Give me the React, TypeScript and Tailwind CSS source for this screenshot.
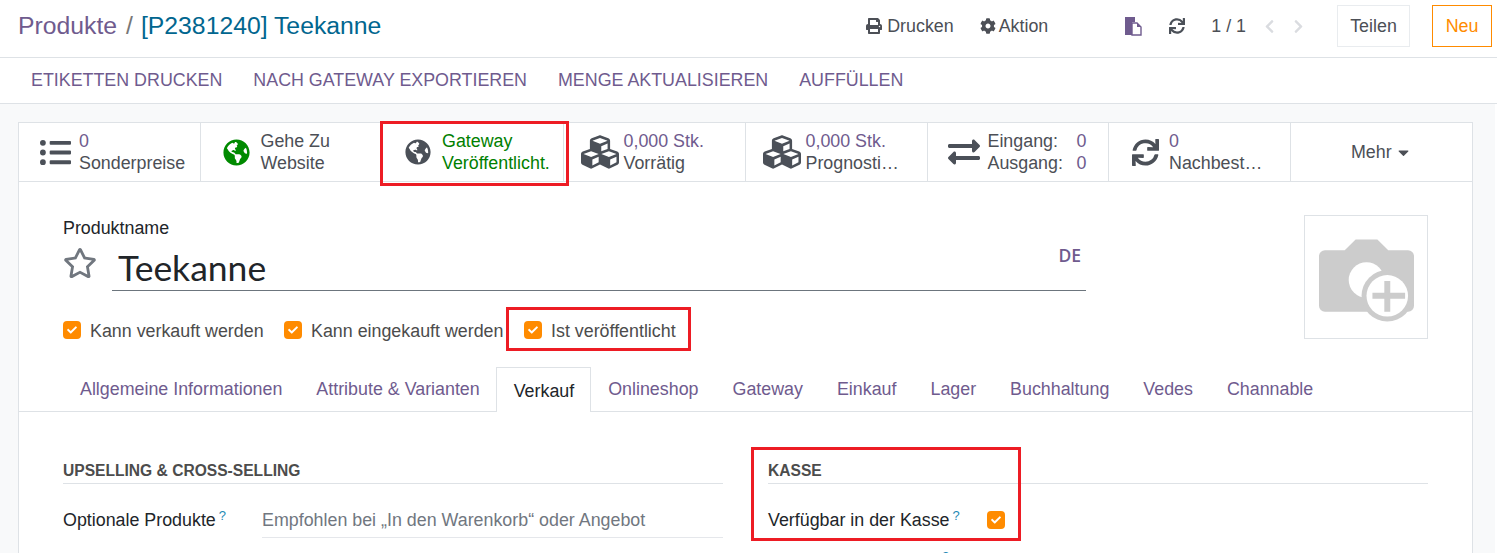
import type { ReactNode } from 'react';
import { FaCaretDown, FaCheck, FaChevronLeft, FaChevronRight, FaCog, FaCubes, FaExchangeAlt, FaGlobeAmericas, FaListUl, FaPrint, FaRegStar, FaSync } from 'react-icons/fa';

const Check = () => (
  <span className="flex size-[18px] items-center justify-center rounded-[4px] bg-[#ff8b00] text-white">
    <FaCheck className="size-[10px]" />
  </span>
);

const CheckRow = ({ label, className }: { label: string; className: string }) => (
  <div className={`flex items-center gap-[9px] ${className}`}>
    <Check />
    <span className="pt-[2px] text-[#4c4c4c]">{label}</span>
  </div>
);

const Stat = ({ icon, children, w = 'w-[181.5px]' }: { icon: ReactNode; children: ReactNode; w?: string }) => (
  <div className={`flex h-full items-center border-r border-[#dee2e6] last:border-r-0 ${w}`}>
    <div className="flex w-[60px] shrink-0 justify-center pl-[12px] text-[#4b5058]">{icon}</div>
    <div className="min-w-0 text-[17.85px] leading-[22.5px] text-[#4c4f56]">{children}</div>
  </div>
);

const tabs = ['Allgemeine Informationen', 'Attribute & Varianten', 'Verkauf', 'Onlineshop', 'Gateway', 'Einkauf', 'Lager', 'Buchhaltung', 'Vedes', 'Channable'];

export default function App() {
  return (
    <div className="relative h-[553px] w-[1497px] overflow-hidden bg-white font-['Liberation_Sans',sans-serif] text-[17.85px] text-[#4c4c4c]">
      <header className="flex h-[58px] items-center border-b border-[#dee2e6] pb-[5px] pl-[18px] pr-[5px]">
        <h1 className="flex-1 text-[24.75px]">
          <span className="text-[#6f5b8e]">Produkte</span>
          <span className="ml-[9px] mr-[8px] text-[#777]">/</span>
          <span className="text-[#01668f]">[P2381240] Teekanne</span>
        </h1>
        <div className="flex items-center text-[#4c4f56]">
          <span className="flex items-center gap-[5px]"><FaPrint className="size-[16px]" />Drucken</span>
          <span className="ml-[26px] flex items-center gap-[3px]"><FaCog className="size-[16px]" />Aktion</span>
          <svg viewBox="0 0 18 20" className="ml-[76px] h-[20px] w-[18px]">
            <path d="M1 1h10v5h-3v13H1z" fill="#6f5b8e" />
            <path d="M8 7h5l4 4v8H8z" fill="#fff" stroke="#6f5b8e" strokeWidth="1.4" />
            <path d="M13 7v4h4" fill="#6f5b8e" />
          </svg>
          <FaSync className="ml-[27px] size-[16px] text-[#4b5058]" />
          <span className="ml-[26px]">1 / 1</span>
          <FaChevronLeft className="ml-[16px] size-[15px] text-[#dadce0]" />
          <FaChevronRight className="ml-[14px] size-[15px] text-[#dadce0]" />
          <span className="ml-[31px] flex h-[42px] w-[73px] items-center justify-center border border-[#e9ecef]">Teilen</span>
          <span className="ml-[22px] flex h-[42px] w-[60px] items-center justify-center border border-[#ff8b00] text-[#ff8b00]">Neu</span>
        </div>
      </header>

      <nav className="flex h-[46px] items-center gap-[31px] border-b border-[#dee2e6] pb-[1px] pl-[31px] text-[#6f5b8e]">
        <span>ETIKETTEN DRUCKEN</span>
        <span>NACH GATEWAY EXPORTIEREN</span>
        <span>MENGE AKTUALISIEREN</span>
        <span>AUFFÜLLEN</span>
      </nav>

      <main className="mr-[2px] h-full bg-[#f8f9fa] pl-[18px] pr-[22px] pt-[18px]">
        <div className="h-full border border-[#dee2e6] bg-white">
          <div className="flex h-[59px] border-b border-[#dee2e6]">
            <Stat icon={<FaListUl className="size-[31px]" />}>
              <div className="text-[#6f5b8e]">0</div>
              <div>Sonderpreise</div>
            </Stat>
            <Stat icon={<FaGlobeAmericas className="size-[27px] text-[#008a00]" />}>
              <div>Gehe Zu</div>
              <div>Website</div>
            </Stat>
            <Stat icon={<FaGlobeAmericas className="size-[26px]" />}>
              <div className="text-[#008000]">Gateway</div>
              <div className="text-[#008000]">Veröffentlicht.</div>
            </Stat>
            <Stat w="w-[182px]" icon={<FaCubes className="size-[38px]" />}>
              <div className="text-[#6f5b8e]">0,000 Stk.</div>
              <div>Vorrätig</div>
            </Stat>
            <Stat w="w-[182px]" icon={<FaCubes className="size-[38px]" />}>
              <div className="text-[#6f5b8e]">0,000 Stk.</div>
              <div>Prognosti…</div>
            </Stat>
            <Stat icon={<FaExchangeAlt className="size-[32px]" />}>
              <div className="flex w-[99px] justify-between"><span>Eingang:</span><span className="text-[#6f5b8e]">0</span></div>
              <div className="flex w-[99px] justify-between"><span>Ausgang:</span><span className="text-[#6f5b8e]">0</span></div>
            </Stat>
            <Stat icon={<FaSync className="size-[27px]" />}>
              <div className="text-[#6f5b8e]">0</div>
              <div>Nachbest…</div>
            </Stat>
            <div className="flex flex-1 items-center justify-center gap-[3px] text-[#4c4f56]">
              Mehr <FaCaretDown className="size-[17px]" />
            </div>
          </div>

          <div className="flex justify-between px-[44px] pt-[33px]">
            <div className="w-[1023px] pt-[1px]">
              <div className="leading-[24px] text-[#212529]">Produktname</div>
              <div className="flex">
                <div className="w-[36px] pt-[7px]"><FaRegStar className="h-[32px] w-[34px] text-[#71777f]" /></div>
                <div className="ml-[13px] flex h-[51px] flex-1 items-center justify-between border-b border-[#6c757d] pl-[6px] pt-[6px]">
                  <span className="font-['Lato',sans-serif] text-[35.5px] leading-[44px] text-[#212529]">Teekanne</span>
                  <span className="mb-[26px] mr-[5px] font-['Open_Sans',sans-serif] text-[17.5px] font-semibold text-[#6f5b8e]">DE</span>
                </div>
              </div>
              <div className="mt-[27px] flex h-[24px] items-center">
                <CheckRow label="Kann verkauft werden" className="w-[221px]" />
                <CheckRow label="Kann eingekauft werden" className="w-[240px]" />
                <CheckRow label="Ist veröffentlicht" className="" />
              </div>
            </div>
            <div className="flex h-[124px] w-[124px] items-center justify-center border border-[#dee2e6] pt-[6px]">
              <svg viewBox="0 0 96 84" className="h-[84px] w-[95px]">
                <path d="M6 12h20L37 1h22l11 11h20a6 6 0 0 1 6 6v50a6 6 0 0 1-6 6H6a6 6 0 0 1-6-6V18a6 6 0 0 1 6-6z" fill="#ccc" />
                <circle cx="48" cy="42" r="18" fill="#fff" />
                <circle cx="69" cy="58" r="26" fill="#ccc" />
                <circle cx="69" cy="58" r="21" fill="#fff" />
                <path d="M66 43h6v12h15v6H72v13h-6V61H54v-6h12z" fill="#ccc" />
              </svg>
            </div>
          </div>

          <div className="mt-[25px] flex h-[45px] items-end border-b border-[#dee2e6] pl-[44px]">
            {tabs.map(t => (
              <span
                key={t}
                className={t === 'Verkauf'
                  ? 'relative -mb-px -ml-px flex h-[45px] items-center border border-b-0 border-[#dee2e6] bg-white pl-[17px] pr-[16px] pt-[2px] text-[#212529]'
                  : 'flex h-[45px] items-center border border-transparent px-[16px] pt-[2px] text-[#6f5b8e]'}
              >
                {t}
              </span>
            ))}
          </div>

          <div className="flex pl-[44px] pt-[49px]">
            <div className="w-[660px]">
              <div className="border-b border-[#dee2e6] pb-[3px] pt-[1px] text-[15.6px] font-bold leading-[18px] text-[#4c4c4c]">UPSELLING &amp; CROSS-SELLING</div>
              <div className="mt-[24px] flex">
                <div className="w-[199px] leading-[24px] text-[#212529]">Optionale Produkte<sup className="ml-[3px] text-[13px] text-[#1f8ab5]">?</sup></div>
                <div className="h-[30px] flex-1 border-b border-[#e5e7eb] leading-[24px] text-[#71777f]">Empfohlen bei „In den Warenkorb“ oder Angebot</div>
              </div>
            </div>
            <div className="ml-[45px] w-[660px]">
              <div className="border-b border-[#dee2e6] pb-[3px] pt-[1px] text-[15.6px] font-bold leading-[18px] text-[#4c4c4c]">KASSE</div>
              <div className="mt-[24px] flex items-start">
                <div className="w-[219px] leading-[24px] text-[#212529]">Verfügbar in der Kasse<sup className="ml-[3px] text-[13px] text-[#1f8ab5]">?</sup></div>
                <div className="mt-[3px]"><Check /></div>
              </div>
              <div className="ml-[174px] mt-[17px] text-[13px] leading-[16px] text-[#1f8ab5]">?</div>
            </div>
          </div>
        </div>
      </main>

      {/* red review annotations */}
      <div className="absolute left-[380px] top-[121px] h-[65px] w-[189px] border-[3px] border-[#ed1c24]" />
      <div className="absolute left-[506px] top-[307px] h-[44px] w-[185px] border-[3px] border-[#ed1c24]" />
      <div className="absolute left-[751px] top-[447px] h-[94px] w-[270px] border-[3px] border-[#ed1c24]" />
    </div>
  );
}
